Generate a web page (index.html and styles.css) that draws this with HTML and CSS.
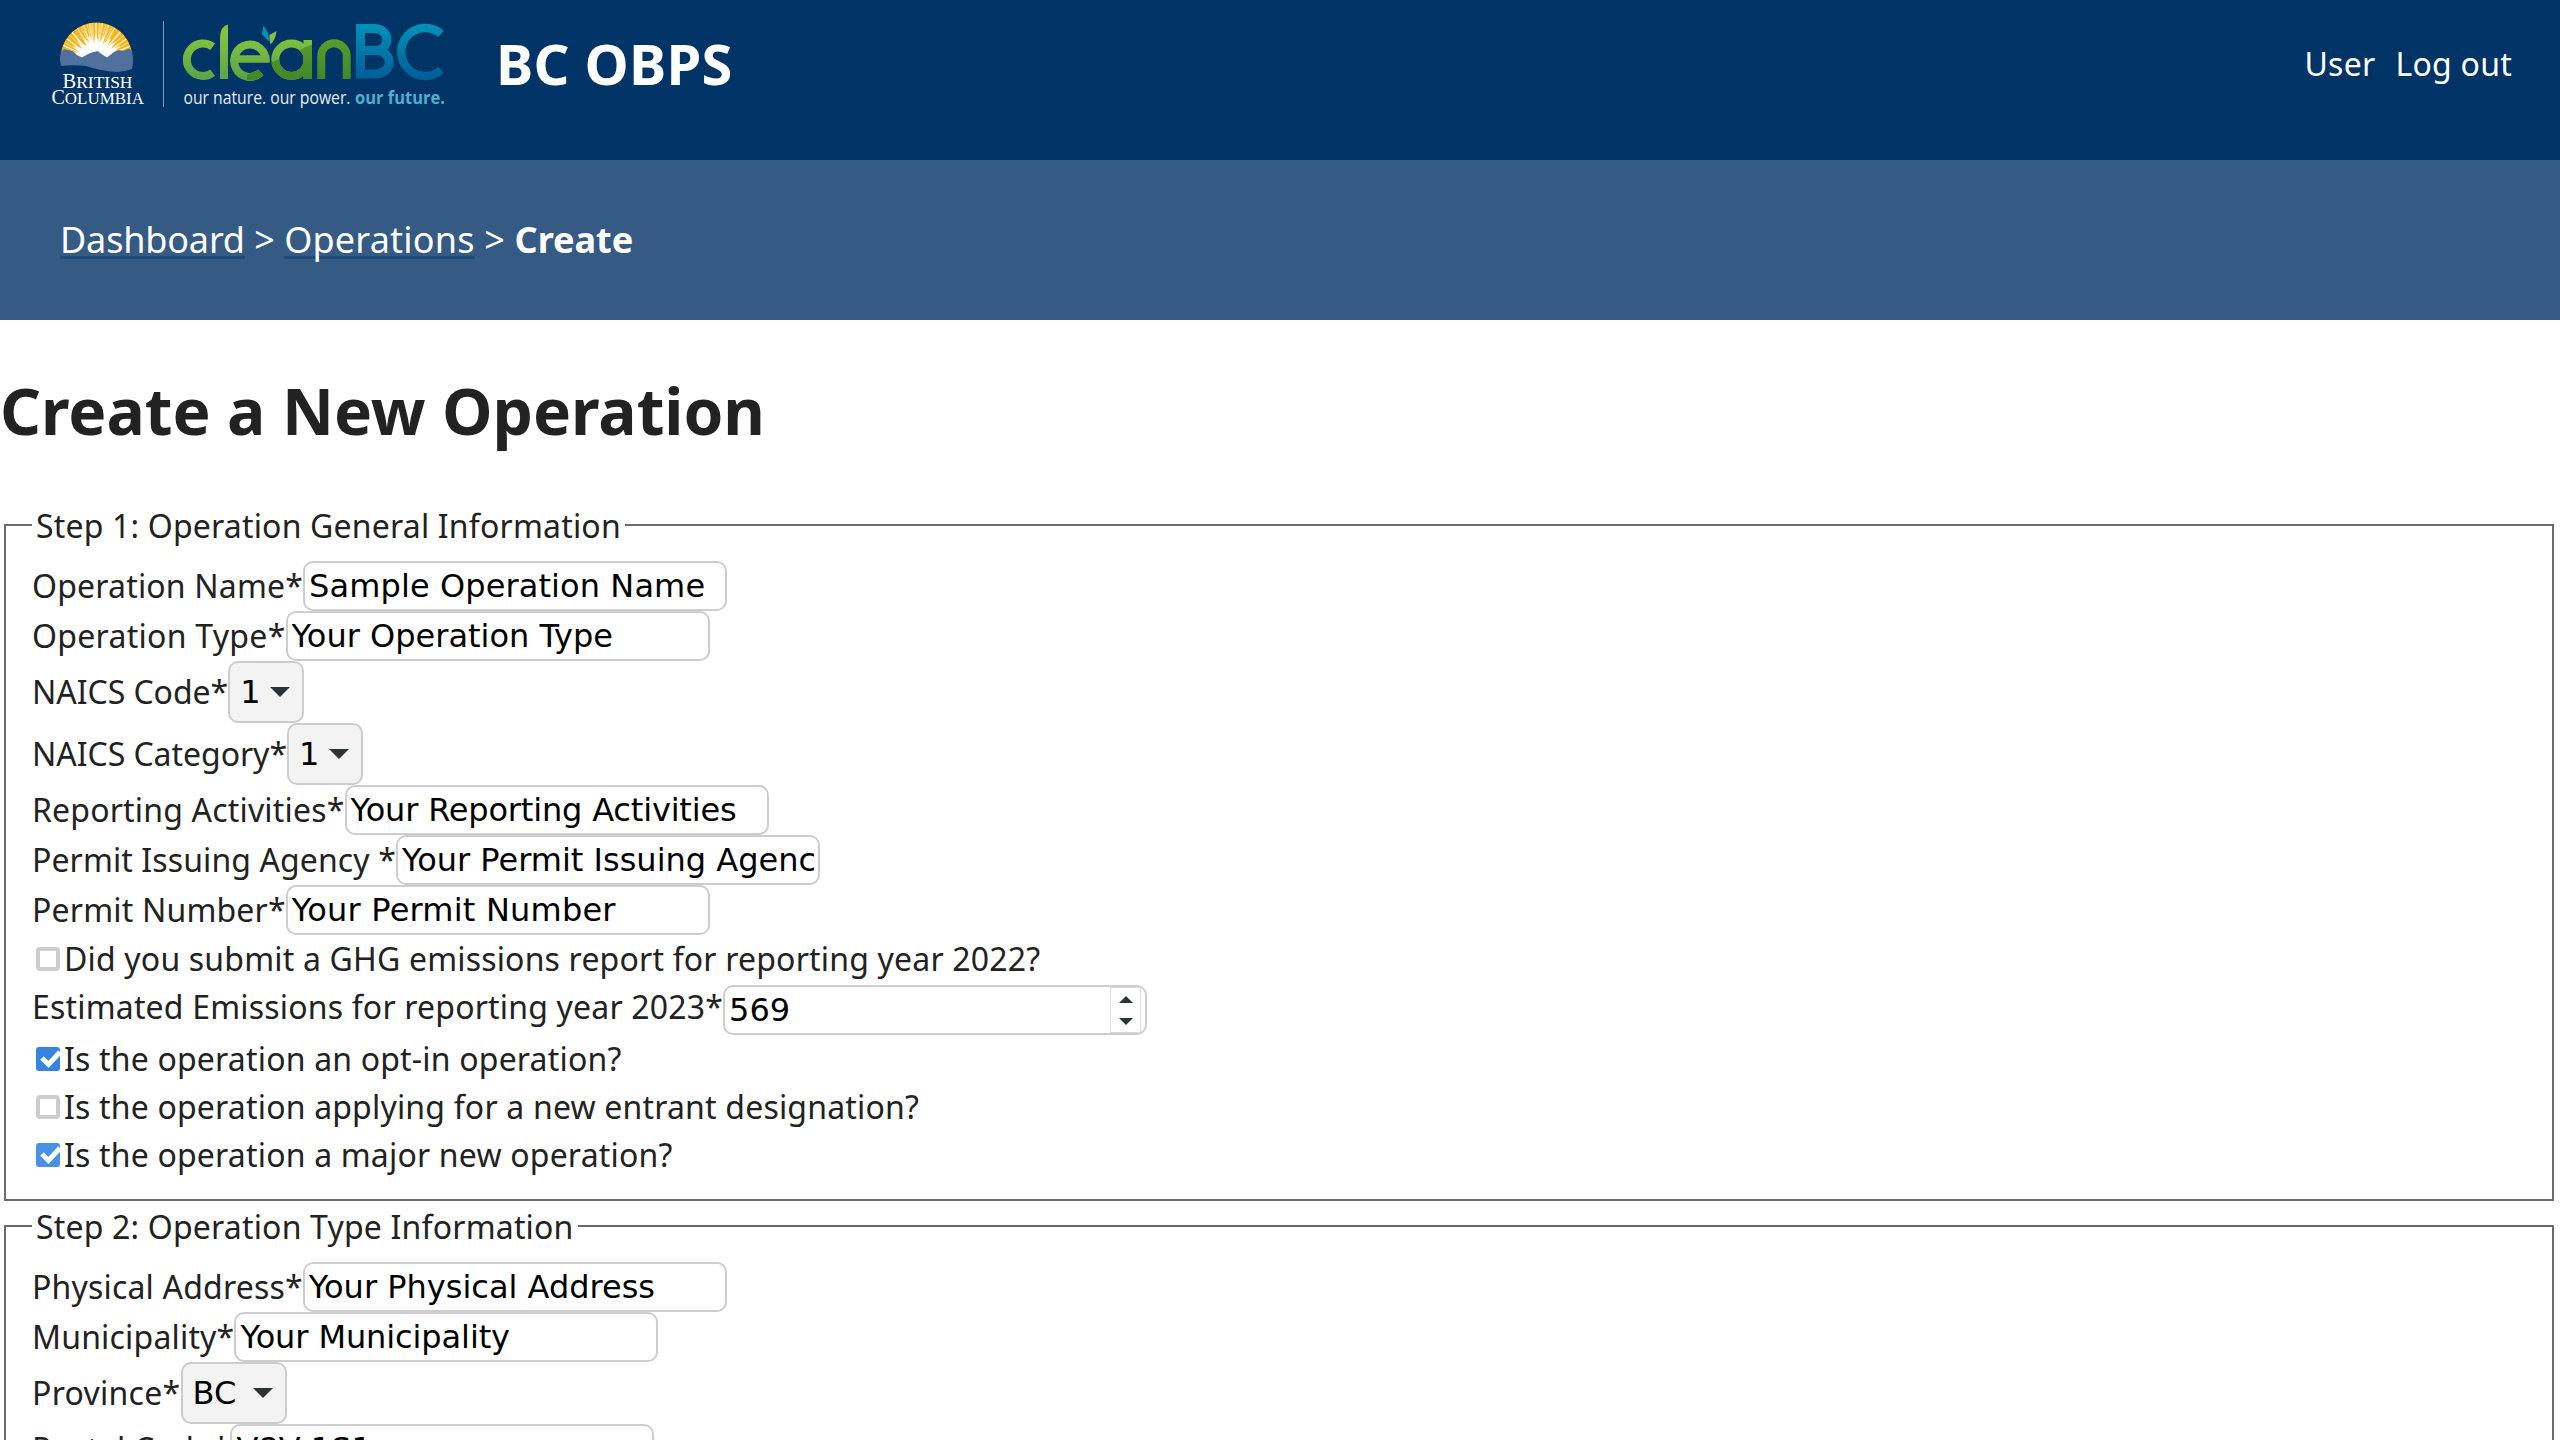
FILE: index.html
```html
<!DOCTYPE html>
<html lang="en">
<head>
<meta charset="utf-8">
<title>BC OBPS</title>
<link rel="stylesheet" href="styles.css">
</head>
<body>
<header class="header">
  <svg class="logo" viewBox="0 0 400 100" width="400" height="100" role="img" aria-label="CleanBC logo">
    <defs>
      <linearGradient id="blue" gradientUnits="userSpaceOnUse" x1="0" y1="12" x2="0" y2="70"><stop offset="0" stop-color="#0094b9"/><stop offset="1" stop-color="#005c97"/></linearGradient>
      <linearGradient id="lime" gradientUnits="userSpaceOnUse" x1="0" y1="25" x2="0" y2="68"><stop offset="0" stop-color="#84c341"/><stop offset="1" stop-color="#5da545"/></linearGradient>
      <linearGradient id="green" gradientUnits="userSpaceOnUse" x1="0" y1="25" x2="0" y2="68"><stop offset="0" stop-color="#5a9f2b"/><stop offset="1" stop-color="#438728"/></linearGradient>
      <clipPath id="sun"><path d="M10 43A36 36 0 0 1 81 43L73 50H20Z"/></clipPath>
      <clipPath id="shade"><path d="M217 54L262 34V72H190V68Z"/></clipPath>
    </defs>
    <path fill="#fdb515" d="M10 42.500A36 36 0 0 1 81 42.500Q45 50 10 42.500Z"/>
    <g stroke="#fff" stroke-width="1.200" clip-path="url(#sun)">
      <path d="M45 50L9 34M45 50L13 27M45 50L19 20M45 50L24 14M45 50L31 11M45 50L38 9M45 50L45 13M45 50L52 9M45 50L59 11M45 50L66 14M45 50L72 19M45 50L78 27M45 50L82 35"/>
      <path stroke-width=".6" d="M45 50L11 31M45 50L16 23M45 50L28 12M45 50L35 10M45 50L41 10M45 50L49 10M45 50L56 10M45 50L63 13M45 50L75 23M45 50L80 31"/>
    </g>
    <path fill="#fff" d="M25 45L20 42L29 43L22 36L31 39L26 30L35 36L32 27L39 34L38 25L43 33L45 24L48 33L53 26L52 34L60 28L56 37L65 31L60 39L70 36L62 43L71 42L62 51H26Z"/>
    <path fill="#50719e" d="M10 42L13 39L19 40.500L22 41.500L26 45L31 47.500L37 44L41 42.500L46.500 41L52 45L56 47.500L63 42L68 40L72 41L78 38.500L81 41Q83 50 81 59Q73 62 66 62Q49 61 35 56Q23 54.500 10 56Q8 48 10 42Z"/>
    <text class="bc-name" x="11.500" y="77.800" textLength="70" lengthAdjust="spacingAndGlyphs"><tspan font-size="20">B</tspan><tspan font-size="17">RITISH</tspan></text>
    <text class="bc-name" x="0.500" y="93.800" textLength="92.500" lengthAdjust="spacingAndGlyphs"><tspan font-size="20">C</tspan><tspan font-size="17">OLUMBIA</tspan></text>
    <path stroke="#8299b2" d="M112.500 11V97"/>
    <g fill="none" stroke-width="8">
      <g stroke="url(#lime)">
        <path d="M161.700 36.700A16.200 16.200 0 1 0 161.700 62.700"/>
        <path stroke-width="7.500" d="M184 49.100H218.300"/>
        <path d="M214.700 52A15.800 16.200 0 1 0 209.800 62.500"/>
        <circle cx="240.500" cy="49.700" r="16.200"/>
      </g>
      <path fill="url(#lime)" stroke="none" d="M169 28Q169 16.500 177 14.500V69H169Z"/>
      <path fill="url(#lime)" stroke="none" d="M252.500 30H261V69H252.500Z"/>
      <g stroke="url(#green)" clip-path="url(#shade)">
        <circle cx="240.500" cy="49.700" r="16.200"/>
        <path stroke-width="8.500" d="M256.750 30V69"/>
        <path d="M196 66.200Q204 67 209.800 62.500"/>
      </g>
      <path stroke="url(#green)" d="M270.300 69V46A12.700 12.700 0 0 1 295.700 46V69"/>
      <g stroke="url(#blue)" stroke-width="9">
        <path d="M309.500 18.500V64H324C343 64 343 40.500 324 40.500H309.500M324 40.500C340 40.500 340 18.500 323 18.500H305"/>
        <path stroke-width="8.500" d="M390 23.900A24 24 0 1 0 390 60.100"/>
      </g>
    </g>
    <path fill="#0091b5" d="M212.300 16Q218 21 218.300 31.700L210.700 24Q212.300 20 212.300 16Z"/>
    <path fill="#84c341" d="M225.500 21L218.300 25Q218.300 30 219.500 34.500Q225 29 225.500 21Z"/>
    <text class="tagline" x="132.500" y="93.800" textLength="167" lengthAdjust="spacingAndGlyphs">our nature. our power.</text>
    <text class="tagline tagline-strong" x="304" y="93.800" textLength="90" lengthAdjust="spacingAndGlyphs">our future.</text>
  </svg>
  <h2 class="app-name">BC OBPS</h2>
  <nav class="user-nav"><a>User</a><a>Log out</a></nav>
</header>
<nav class="breadcrumb"><span><a class="crumb tight">Dashboard</a> &gt; <a class="crumb loose">Operations</a><span class="loose"> &gt; </span><b>Create</b></span></nav>
<main>
  <h1 class="title">Create a New Operation</h1>
  <fieldset class="step step-one">
    <legend>Step 1: Operation General Information</legend>
    <div class="row"><label>Operation Name*</label><input class="field slightly-loose" value="Sample Operation Name"></div>
    <div class="row"><label class="very-loose">Operation Type*</label><input class="field" value="Your Operation Type"></div>
    <div class="row row-select"><label class="plain">NAICS Code*</label><div class="select">1<i class="arrow"></i></div></div>
    <div class="row row-select"><label class="plain">NAICS Category*</label><div class="select">1<i class="arrow"></i></div></div>
    <div class="row"><label>Reporting Activities*</label><input class="field tight" value="Your Reporting Activities"></div>
    <div class="row"><label class="slightly-loose">Permit Issuing Agency *</label><input class="field" value="Your Permit Issuing Agency"></div>
    <div class="row"><label>Permit Number*</label><input class="field loose" value="Your Permit Number"></div>
    <div class="row row-check"><i class="check"></i><label>Did you submit a GHG emissions report for reporting year 2022?</label></div>
    <div class="row row-number"><label>Estimated Emissions for reporting year 2023*</label><div class="field number">569<span class="spinner"><i class="up"></i><i class="down"></i></span></div></div>
    <div class="row row-check"><svg class="check-on" viewBox="0 0 24 24"><rect class="box" width="24" height="24" rx="3"/><path class="tick" d="M6 11L12.500 17.500L24 5"/></svg><label>Is the operation an opt-in operation?</label></div>
    <div class="row row-check"><i class="check"></i><label>Is the operation applying for a new entrant designation?</label></div>
    <div class="row row-check"><svg class="check-on soft" viewBox="0 0 24 24"><rect class="box" width="24" height="24" rx="3"/><path class="tick" d="M6 11L12.500 17.500L24 5"/></svg><label>Is the operation a major new operation?</label></div>
  </fieldset>
  <fieldset class="step">
    <legend>Step 2: Operation Type Information</legend>
    <div class="row"><label>Physical Address*</label><input class="field" value="Your Physical Address"></div>
    <div class="row"><label>Municipality*</label><input class="field slightly-tight" value="Your Municipality"></div>
    <div class="row row-select"><label class="very-loose">Province*</label><div class="select province">BC<i class="arrow"></i></div></div>
    <div class="row"><label class="very-loose">Postal Code*</label><input class="field" value="V8V 1S1"></div>
  </fieldset>
</main>
</body>
</html>
```
FILE: styles.css
```css
* { box-sizing: border-box; }
body { margin: 0; height: 1440px; overflow: hidden; background: #fff; color: #222; font: 32px/48px "Noto Sans", sans-serif; }
.header { display: flex; align-items: flex-start; height: 160px; padding: 10px 48px 0 51px; background: #003366; color: #fff; }
.logo { display: block; flex: none; }
.bc-name { fill: #fff; font-family: "Liberation Serif", serif; }
.tagline { fill: #e5ebf2; font-family: "Open Sans", sans-serif; font-size: 18px; font-weight: 400; }
.tagline-strong { fill: #4eb0cc; font-weight: 700; }
.app-name { margin: 18px 0 0 45px; font-size: 56px; line-height: 70px; font-weight: 700; letter-spacing: 0.25px; }
.user-nav { display: flex; gap: 20px; margin: 30px 0 0 auto; letter-spacing: 0.25px; }
.breadcrumb { display: flex; align-items: center; height: 160px; padding: 0 60px; background: #355b84; color: #fff; font-size: 36px; }
.crumb { text-decoration: underline; text-decoration-color: #1e4b78; text-decoration-thickness: 3px; text-underline-offset: 3px; text-decoration-skip-ink: none; }
.title { margin: 43px 0; font-size: 64px; line-height: 96px; letter-spacing: -0.07px; }
.step { margin: 0 6px 2px 4px; padding: 13px 24px 20px 26px; border: 2px solid #6b6b6b; }
.step-one { height: 699px; }
legend { height: 46px; padding: 0 4px; letter-spacing: 0.18px; }
.row { display: flex; align-items: center; height: 50px; }
.row-select { height: 62px; }
.row-check { height: 48px; }
.row-number { height: 52px; align-items: flex-end; }
.row-number label { margin-bottom: 4px; }
.row label { white-space: pre; letter-spacing: 0.18px; }
.field { display: block; width: 424px; height: 50px; padding: 0 4px; border: 2px solid #cdcdcd; border-radius: 10px; background: #fff; color: #000; font: 32px/46px "DejaVu Sans", sans-serif; }
.select { display: flex; align-items: center; justify-content: space-between; width: 76px; height: 62px; padding: 0 12px 0 10px; border: 2px solid #cdcdcd; border-radius: 10px; background: #f3f3f3; color: #000; font-family: "DejaVu Sans", sans-serif; }
.province { width: 106px; }
.arrow { border: 10px solid transparent; border-top-color: #2e3436; border-bottom: 0; }
.check { width: 24px; height: 24px; margin: 0 4px; border: 4px solid #cdcdcd; border-radius: 4px; }
.check-on { width: 24px; height: 24px; margin: 0 4px; }
.box { fill: #3584e4; }
.soft .box { fill: #4990e7; }
.tick { fill: none; stroke: #fff; stroke-width: 5; }
.number { display: flex; justify-content: space-between; }
.spinner { display: flex; flex-direction: column; align-items: center; justify-content: space-between; width: 31px; height: 46px; padding: 8px 0 7px; border: 1px solid #dcdcdc; }
.up { border: 7px solid transparent; border-bottom-color: #2e3436; border-top: 0; }
.down { border: 7px solid transparent; border-top-color: #2e3436; border-bottom: 0; }
.loose { letter-spacing: 0.2px; }
.tight { letter-spacing: -0.17px; }
.slightly-tight { letter-spacing: -0.1px; }
.row .plain { letter-spacing: -0.05px; }
.row .slightly-loose { letter-spacing: 0.1px; }
.row .very-loose { letter-spacing: 0.28px; }
```
